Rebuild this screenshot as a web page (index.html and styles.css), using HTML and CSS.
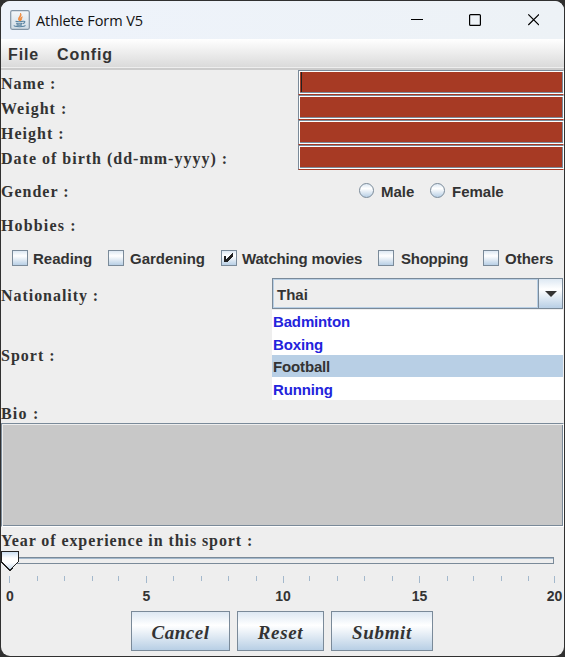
FILE: index.html
```html
<!DOCTYPE html>
<html lang="en">
<head>
<meta charset="utf-8">
<title>Athlete Form V5</title>
<link rel="stylesheet" href="styles.css">
</head>
<body>
<div class="window">
  <header class="titlebar">
    <svg class="app-icon" width="20" height="20" viewBox="0 0 20 20">
      <defs><linearGradient id="ico" x1="0" y1="0" x2="0" y2="1"><stop offset="0" stop-color="#f4f7f9"/><stop offset="1" stop-color="#cfdbe5"/></linearGradient></defs>
      <rect x=".7" y=".7" width="18.6" height="18.6" rx="1.5" fill="url(#ico)" stroke="#8395a5" stroke-width="1.2"/>
      <path d="M9.6 11C6.5 8.300 11 6.500 10.500 3.200C12.500 6 8.500 7.500 9.600 11M10.500 11C9.300 9 10.300 7.800 12.300 6.800C11 8.400 12.300 9.300 10.500 11" fill="#ef8a3c" stroke="#ef8a3c" stroke-width=".9"/>
      <path d="M5.500 11.300Q9 12.300 13 11.300M6.200 13.200Q9.500 14.300 12.300 13.200M13 11.200Q15.600 11 14.500 12.600Q13.900 13.300 12.800 13.500M4.300 15.200Q3.500 16.700 9.500 16.700Q15.500 16.500 15 15.200M6.500 14.900Q9.500 15.600 12 14.900" fill="none" stroke="#58829f" stroke-width="1.1"/>
    </svg>
    <span class="title">Athlete Form V5</span>
    <svg class="controls" width="128" height="16" viewBox="0 0 128 16" fill="none" stroke="#000">
      <path d="M0 7.500H12" />
      <rect x="58.600" y="2.600" width="10.800" height="10.800" rx="1" stroke-width="1.200"/>
      <path d="M117.300 2.300L128 13M128 2.300L117.300 13" stroke-width="1.200"/>
    </svg>
  </header>
  <nav class="menubar"><span class="m-file">File</span><span class="m-config">Config</span></nav>
  <main>
    <div class="row"><label class="lb">Name :</label><div class="field"><i class="caret"></i></div></div>
    <div class="row"><label class="lb">Weight :</label><div class="field"></div></div>
    <div class="row"><label class="lb">Height :</label><div class="field"></div></div>
    <div class="row"><label class="lb">Date of birth (dd-mm-yyyy) :</label><div class="field"></div></div>
    <div class="row gender"><label class="lb">Gender :</label>
      <div class="radios"><span class="radio"></span><span class="opt male">Male</span><span class="radio"></span><span class="opt">Female</span></div></div>
    <div class="row hobbies"><label class="lb">Hobbies :</label></div>
    <div class="checks">
      <div class="check c1"><span class="box"></span><span class="opt">Reading</span></div>
      <div class="check c2"><span class="box"></span><span class="opt">Gardening</span></div>
      <div class="check c3"><span class="box"><svg width="14" height="14" viewBox="0 0 14 14" shape-rendering="crispEdges"><path d="M2 5H4V8L10 2H11V5L5 11H2Z" fill="#222"/></svg></span><span class="opt">Watching movies</span></div>
      <div class="check c4"><span class="box"></span><span class="opt">Shopping</span></div>
      <div class="check c5"><span class="box"></span><span class="opt">Others</span></div>
    </div>
    <div class="row nation"><label class="lb">Nationality :</label>
      <div class="combo"><div class="value">Thai</div><div class="arrow"><svg width="12" height="6"><path d="M0 0H12L6 6Z" fill="#333"/></svg></div></div></div>
    <div class="row sport"><label class="lb">Sport :</label>
      <ul class="list"><li>Badminton</li><li>Boxing</li><li class="sel">Football</li><li>Running</li></ul></div>
    <div class="row bio"><label class="lb">Bio :</label></div>
    <div class="area"></div>
    <div class="row year"><label class="lb">Year of experience in this sport :</label></div>
    <svg class="slider" width="563" height="34" viewBox="1 550 563 34" shape-rendering="crispEdges">
      <defs><linearGradient id="knob" x1="0" y1="0" x2="0" y2="1"><stop offset="0" stop-color="#c8ddf2"/><stop offset=".35" stop-color="#fff"/><stop offset=".6" stop-color="#fff"/><stop offset="1" stop-color="#b8cfe5"/></linearGradient></defs>
      <rect x="10.500" y="557.500" width="543" height="6" fill="#eee" stroke="#7a8a99"/>
      <path d="M11 558.500H553" stroke="#a3b8cc"/>
      <path d="M1.500 551.500H18.500V561.500L10 570.500L1.500 562Z" fill="url(#knob)" stroke="#222"/>
      <path d="M9.500 576v7M146.500 576v7M283.500 576v7M419.500 576v7M554.500 576v7M37.500 576v5M64.500 576v5M92.500 576v5M118.500 576v5M173.500 576v5M201.500 576v5M228.500 576v5M256.500 576v5M309.500 576v5M337.500 576v5M364.500 576v5M392.500 576v5M447.500 576v5M473.500 576v5M501.500 576v5M528.500 576v5" stroke="#a3b8cc"/>
    </svg>
    <div class="scale"><span>0</span><span>5</span><span>10</span><span>15</span><span>20</span></div>
    <div class="buttons"><button class="b1">Cancel</button><button class="b2">Reset</button><button class="b3">Submit</button></div>
  </main>
</div>
</body>
</html>
```
FILE: styles.css
```css
* { box-sizing: border-box; }
body { margin: 0; background: #303030; font-family: "Liberation Sans", sans-serif; color: #333; }
.window { margin: 1px; width: 563px; height: 655px; background: #eee; border-radius: 9px; overflow: hidden; white-space: nowrap; }
.titlebar { height: 38px; background: linear-gradient(90deg, #eef3fb, #edf2f6); display: flex; align-items: center; padding: 0 25px 0 9px; }
.app-icon { flex: none; }
.title { margin-left: 6px; font: 14.5px "Open Sans", sans-serif; letter-spacing: -.1px; color: #111; }
.controls { margin-left: auto; }
.menubar { height: 31px; padding: 0 7px; background: linear-gradient(#fff, #dadada 28px, #eee 28px, #eee 29px, #ccc 29px); display: flex; font: bold 16px/31px "Liberation Sans", sans-serif; letter-spacing: .9px; }
.m-file { width: 49px; }
.row { display: flex; height: 25px; align-items: center; justify-content: space-between; }
.lb { font: bold 16px/25px "Liberation Serif", serif; letter-spacing: 1px; padding-top: 2px; }
.field { width: 266px; height: 25px; border: 1px solid #fff; border-top-color: #7a8a99; border-left-color: #7a8a99; border-bottom-color: #a73a24; background: #a73a24; padding: 0; box-shadow: inset 1px 1px #fff, inset 0 -1px #fff, inset -1px 0 #7a8a99, inset 0 -2px #7a8a99; }
.caret { display: block; width: 1px; height: 20px; margin: 1px 0 0 2px; background: #222; }
.row.gender { height: 42px; }
.gender .lb { padding-top: 0; }
.radios { display: flex; align-items: center; width: 205px; }
.radio { width: 15px; height: 15px; border: 1px solid #7a8a99; border-radius: 50%; margin: -1px 7px 0 0; background: linear-gradient(#dde8f3, #fff 35%, #b8cfe5); }
.opt { font: bold 15px/20px "Liberation Sans", sans-serif; padding-top: 1px; }
.male { width: 49px; }
.row.hobbies { height: 26px; }
.hobbies .lb { padding-top: 0; letter-spacing: 1.15px; }
.checks { height: 40px; display: grid; grid-template-columns: 96px 113px 157px 105px 1fr; padding-left: 11px; align-items: center; }
.check { display: flex; align-items: center; }
.box { width: 16px; height: 16px; flex: none; border: 1px solid #7a8a99; background: linear-gradient(#dde8f3, #fff 35%, #b8cfe5); margin-right: 5px; }
.box svg { display: block; }
.c2 .box, .c5 .box { margin-right: 6px; }
.c3 .opt { letter-spacing: -.18px; }
.c4 .box { margin-right: 7px; }
.c4 .opt { letter-spacing: -.25px; }
.row.nation { height: 32px; padding-right: 1px; align-items: flex-start; }
.nation .lb { padding-top: 5px; letter-spacing: .95px; }
.combo { width: 291px; height: 31px; display: flex; border: 1px solid #7a8a99; font: bold 15px/30px "Liberation Sans", sans-serif; }
.value { flex: 1; padding-left: 3px; border: 1px solid #b8cfe5; line-height: 30px; height: 29px; }
.arrow { width: 25px; flex: none; margin-right: -1px; border-left: 1px solid #7a8a99; border-right: 1px solid #7a8a99; display: flex; align-items: center; justify-content: center; background: linear-gradient(#dde8f3, #fff 35%, #b8cfe5); }
.row.sport { height: 90px; padding-right: 1px; }
.sport .lb { padding-top: 1px; }
.list { width: 291px; height: 90px; margin: 0; padding: 0; list-style: none; background: #fff; color: #2323dc; font: bold 15px/24px "Liberation Sans", sans-serif; letter-spacing: -.15px; display: grid; grid-template-rows: 23px 22px 22px 23px; }
.list li { padding-left: 1px; }
.list li:last-child { line-height: 26px; }
.sel { background: #b8cfe5; color: #333; }
.row.bio { height: 23px; }
.bio .lb { padding-top: 4px; letter-spacing: 1.2px; }
.area { height: 104px; background: #c8c8c8; border: 1px solid #7a8a99; border-bottom-color: #fff; border-right-color: #fff; box-shadow: inset 1px 1px #eee, inset -1px -1px #7a8a99; }
.row.year { height: 23px; }
.year .lb { padding-top: 4px; letter-spacing: .92px; }
.slider { display: block; }
.scale { height: 27px; margin-left: -5px; width: 571px; display: grid; grid-template-columns: 28px 245px 28px 245px 25px; text-align: center; font: bold 14px/24px "Liberation Sans", sans-serif; }
.buttons { display: flex; gap: 7px; padding-left: 130px; }
button { height: 40px; padding: 4px 0 0; border: 1px solid #7a8a99; background: linear-gradient(#dde8f3, #fff 35%, #b8cfe5); color: #333; font: italic bold 19px "Liberation Serif", serif; letter-spacing: .7px; }
.b1 { width: 99px; letter-spacing: .5px; } .b2 { width: 87px; } .b3 { width: 102px; }
```
